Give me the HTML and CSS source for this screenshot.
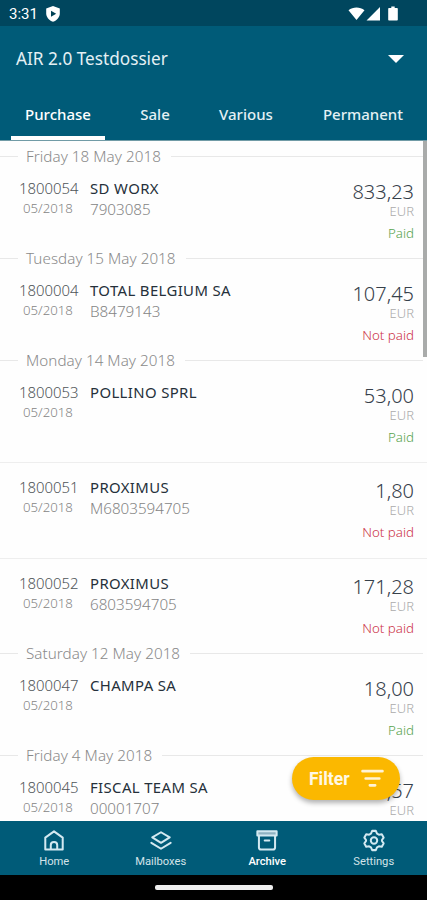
FILE: index.html
```html
<!DOCTYPE html>
<html lang="en">
<head>
<meta charset="utf-8">
<title>AIR 2.0 Testdossier</title>
<link rel="stylesheet" href="styles.css">
</head>
<body>
<div class="statusbar">
  <span class="clock">3:31</span>
  <svg class="shield" viewBox="0 0 14 16"><path fill="#fff" d="M7 0l6.8 2.6v4.6c0 4-2.8 7-6.8 8.6C3 14.200.2 11.200.2 7.200V2.600z"/><path fill="#004256" d="M5 4.700l5.200 3L5 10.700z"/></svg>
  <svg class="signals" viewBox="0 0 50 16"><path fill="#fff" d="M.5 4.300C5 .7 12 .7 16.500 4.300L8.500 14zM32 1v13.500H18.500zM41 2h2.300V.5h3.400V2H49q.8 0 .8.8v11q0 .8-.8.8h-8q-.8 0-.8-.8v-11q0-.8.8-.8z"/></svg>
</div>
<header class="appbar">
  <div class="dossier"><span>AIR 2.0 Testdossier</span><i class="caret"></i></div>
  <nav class="tabs">
    <a class="tab purchase active">Purchase</a><a class="tab sale">Sale</a><a class="tab various">Various</a><a class="tab permanent">Permanent</a>
  </nav>
</header>
<main class="list">
  <div class="scrollbar"></div>
  <section class="entry dated">
    <h2 class="date"><span>Friday 18 May 2018</span></h2>
    <div class="row"><div class="doc"><b>1800054</b><small>05/2018</small></div><div class="party"><b>SD WORX</b><small>7903085</small></div><div class="sum"><b>833,23</b><small>EUR</small><em class="paid">Paid</em></div></div>
  </section>
  <section class="entry dated">
    <h2 class="date"><span>Tuesday 15 May 2018</span></h2>
    <div class="row"><div class="doc"><b>1800004</b><small>05/2018</small></div><div class="party"><b>TOTAL BELGIUM SA</b><small>B8479143</small></div><div class="sum"><b>107,45</b><small>EUR</small><em class="unpaid">Not paid</em></div></div>
  </section>
  <section class="entry dated">
    <h2 class="date"><span>Monday 14 May 2018</span></h2>
    <div class="row"><div class="doc"><b>1800053</b><small>05/2018</small></div><div class="party"><b>POLLINO SPRL</b></div><div class="sum"><b>53,00</b><small>EUR</small><em class="paid">Paid</em></div></div>
  </section>
  <section class="entry ruled">
    <div class="row"><div class="doc"><b>1800051</b><small>05/2018</small></div><div class="party"><b>PROXIMUS</b><small>M6803594705</small></div><div class="sum"><b>1,80</b><small>EUR</small><em class="unpaid">Not paid</em></div></div>
  </section>
  <section class="entry ruled">
    <div class="row"><div class="doc"><b>1800052</b><small>05/2018</small></div><div class="party"><b>PROXIMUS</b><small>6803594705</small></div><div class="sum"><b>171,28</b><small>EUR</small><em class="unpaid">Not paid</em></div></div>
  </section>
  <section class="entry dated">
    <h2 class="date"><span>Saturday 12 May 2018</span></h2>
    <div class="row"><div class="doc"><b>1800047</b><small>05/2018</small></div><div class="party"><b>CHAMPA SA</b></div><div class="sum"><b>18,00</b><small>EUR</small><em class="paid">Paid</em></div></div>
  </section>
  <section class="entry dated">
    <h2 class="date"><span>Friday 4 May 2018</span></h2>
    <div class="row"><div class="doc"><b>1800045</b><small>05/2018</small></div><div class="party"><b>FISCAL TEAM SA</b><small>00001707</small></div><div class="sum"><b>,57</b><small>EUR</small></div></div>
  </section>
  <button class="filter"><span>Filter</span><svg viewBox="0 0 22 18"><path d="M1.500 2h19M4.500 9h13M8.500 15.500h5" fill="none" stroke="#fff3d6" stroke-width="2.600" stroke-linecap="round"/></svg></button>
</main>
<nav class="bottom">
  <a><svg viewBox="0 0 24 24"><path d="M2.500 8.800L12 2l9.500 6.800V21.800H2.500zM8.500 21.500v-4.500q0-3.300 3.500-3.300t3.500 3.300v4.500"/></svg><span>Home</span></a>
  <a><svg viewBox="0 0 24 24"><path d="M12 3l9.500 5.500L12 14.500 2.500 8.500zM1.500 14.500L12 21l10.500-6.500"/></svg><span>Mailboxes</span></a>
  <a class="current"><svg viewBox="0 0 24 24"><path fill="#8fb3c2" d="M1.500 2h21v4.500h-21z"/><path d="M3.200 7v12.500q0 2.300 2.300 2.300h13q2.300 0 2.300-2.300V7M9.500 12h5"/></svg><span>Archive</span></a>
  <a><svg viewBox="0 0 24 24"><path d="M10 1.500h4l1.300 3 2 1.100 3.200-.3 2 3.500L20.700 11.500v1l1.800 2.700-2 3.500-3.200-.3-2 1.100-1.300 3h-4l-1.300-3-2-1.100-3.200.3-2-3.500L3.300 12.500v-1L1.500 8.800l2-3.500 3.200.3 2-1.100z"/><circle cx="12" cy="12" r="3.500"/></svg><span>Settings</span></a>
</nav>
<div class="gesture"><i></i></div>
</body>
</html>
```
FILE: styles.css
```css
* { box-sizing: border-box; }
body {
  margin: 0;
  width: 427px;
  height: 900px;
  overflow: hidden;
  display: flex;
  flex-direction: column;
  background: #fefefe;
  font-family: "Noto Sans", "Open Sans", sans-serif;
}
b, small, em, h2 { font-weight: 300; font-style: normal; }
.statusbar {
  height: 26px;
  flex: none;
  display: flex;
  align-items: center;
  padding: 1px 29px 0 9px;
  background: #00465e;
  color: #fff;
  font: 400 15px Roboto, sans-serif;
}
.clock { width: 37px; }
.shield { width: 14px; height: 16px; }
.signals { width: 50px; height: 16px; margin-left: auto; }
.appbar { height: 114px; flex: none; background: #005b78; color: #e4f0f4; }
.dossier {
  height: 64px;
  padding: 0 23px 0 16px;
  display: flex;
  align-items: center;
  justify-content: space-between;
  font-size: 17.200px;
}
.caret { border: 8.500px solid transparent; border-top: 8px solid #fff; border-bottom: 0; margin-top: 2px; }
.tabs { height: 50px; display: flex; padding-left: 11px; font-size: 15px; font-weight: 500; }
.tab { flex: none; height: 50px; line-height: 48px; text-align: center; border-bottom: 4px solid transparent; }
.active { border-color: #fff; color: #fff; }
.purchase { width: 94px; }
.sale { width: 100px; }
.various { width: 82px; }
.permanent { width: 152px; }
.list {
  position: relative;
  height: 681px;
  flex: none;
  padding-top: 15px;
  overflow: hidden;
  border-top: 1px solid #719ba6;
}
.scrollbar { position: absolute; top: 0; right: 0; width: 4px; height: 216px; background: #a9abaa; }
.entry { height: 95.5px; padding: 12px 13px 0 19px; }
.dated { height: 102.1px; padding: 0 13px 0 19px; display: flow-root; }
.ruled { border-top: 1px solid #eee; }
.date {
  height: 20px;
  margin: -10px -13px 10px -19px;
  display: flex;
  align-items: center;
  gap: 8px;
  font-size: 15.200px;
  letter-spacing: .05px;
  color: #8a8a8a;
  white-space: nowrap;
}
.date::before, .date::after { content: ""; height: 1px; background: #e8e8e8; }
.date::before { width: 18px; }
.date::after { flex: 1; margin-left: 2px; margin-right: 4px; }
.row { display: flex; }
.row > div { display: flex; flex-direction: column; }
.row b { font-size: 14.900px; line-height: 24px; color: #4f5558; }
.row small { font-size: 15.200px; line-height: 18px; color: #858585; }
.doc { width: 71px; }
.row .doc small { font-size: 13.200px; line-height: 16px; padding-left: 4px; }
.row .party b { font-size: 14.900px; letter-spacing: .38px; font-weight: 400; color: #25303a; }
.row .sum { margin-left: auto; align-items: flex-end; padding-top: 2px; }
.row .sum b { font-size: 20px; line-height: 27px; color: #36404a; }
.row .sum small { font-size: 13px; line-height: 13px; color: #aaa; }
.sum em { font-size: 13.300px; line-height: 18px; margin-top: 6px; }
.paid { color: #56a34c; }
.unpaid { color: #cc3348; }
.filter {
  position: absolute;
  left: 292px;
  top: 616px;
  width: 108px;
  height: 43px;
  padding: 0 16px 0 17px;
  border: 0;
  border-radius: 22px;
  display: flex;
  align-items: center;
  justify-content: space-between;
  background: #fbb800;
  color: #fff8e5;
  font: 700 17.500px Roboto, sans-serif;
  box-shadow: 0 3px 5px rgba(0, 0, 0, .3);
}
.filter svg { width: 23px; height: 19px; }
.bottom { height: 54px; flex: none; display: grid; grid-template-columns: repeat(4, 1fr); padding-left: 1px; background: #005b78; }
.bottom a {
  display: flex;
  flex-direction: column;
  align-items: center;
  padding-top: 8px;
  color: #d3e3e9;
  font: 400 11.200px/15px Roboto, sans-serif;
}
.bottom svg { width: 22px; height: 23px; margin-bottom: 2px; fill: none; stroke: #d3e9f1; stroke-width: 2.200; stroke-linejoin: round; stroke-linecap: round; }
.bottom .current { color: #fff; font-weight: 500; }
.gesture { height: 25px; flex: none; background: #000; display: flex; justify-content: center; align-items: center; }
.gesture i { width: 118px; height: 5px; border-radius: 2px; background: #eee; }
```
